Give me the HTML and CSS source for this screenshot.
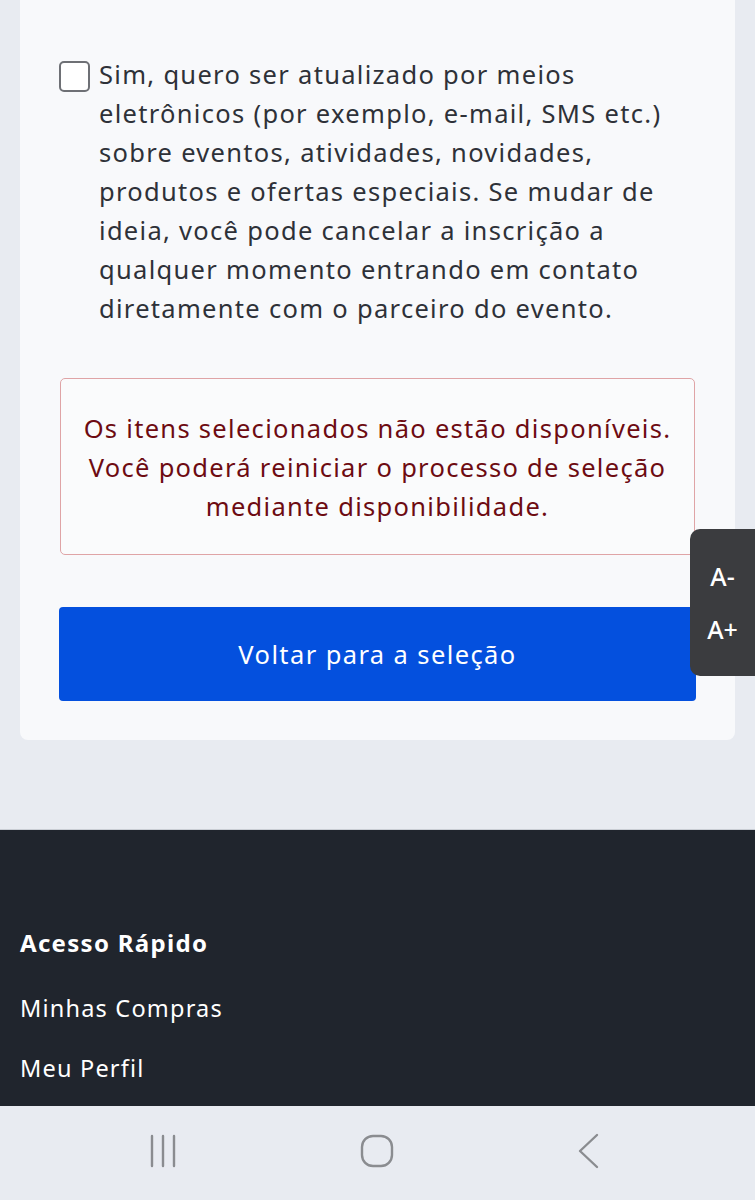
FILE: index.html
```html
<!DOCTYPE html>
<html lang="pt-BR">
<head>
<meta charset="utf-8">
<title>Seleção</title>
<link rel="stylesheet" href="styles.css">
</head>
<body>
<main class="page">
  <section class="card">
    <label class="consent">
      <span class="checkbox"></span>
      <span class="consent-text">Sim, quero ser atualizado por meios<br>eletrônicos (por exemplo, e-mail, SMS etc.)<br>sobre eventos, atividades, novidades,<br>produtos e ofertas especiais. Se mudar de<br>ideia, você pode cancelar a inscrição a<br>qualquer momento entrando em contato<br>diretamente com o parceiro do evento.</span>
    </label>
    <div class="alert">Os itens selecionados não estão disponíveis.<br>Você poderá reiniciar o processo de seleção<br>mediante disponibilidade.</div>
    <button class="primary-btn" type="button">Voltar para a seleção</button>
  </section>
</main>
<footer class="footer">
  <h2 class="footer-title">Acesso Rápido</h2>
  <a class="footer-link" href="#">Minhas Compras</a>
  <a class="footer-link" href="#">Meu Perfil</a>
</footer>
<nav class="sysnav">
  <svg class="nav-icon" width="30" height="34" viewBox="0 0 30 34"><g stroke="#8a8c90" stroke-width="2.4" stroke-linecap="round"><line x1="3" y1="2" x2="3" y2="32"/><line x1="14" y1="2" x2="14" y2="32"/><line x1="25" y1="2" x2="25" y2="32"/></g></svg>
  <svg class="nav-icon" width="34" height="34" viewBox="0 0 34 34"><rect x="2" y="2" width="30" height="30" rx="11" fill="none" stroke="#8a8c90" stroke-width="2.4"/></svg>
  <svg class="nav-icon" width="24" height="36" viewBox="0 0 24 36"><polyline points="21,2 4,18 21,34" fill="none" stroke="#8a8c90" stroke-width="2.4" stroke-linecap="round" stroke-linejoin="round"/></svg>
</nav>
<div class="font-tool">
  <span class="font-btn">A-</span>
  <span class="font-btn">A+</span>
</div>
</body>
</html>
```
FILE: styles.css
```css
* { box-sizing: border-box; }
html, body { margin: 0; padding: 0; }
body {
  background: #e8ebf1;
  font-family: "Noto Sans", "Open Sans", sans-serif;
  color: #2b2f36;
  width: 755px;
}
.page {
  padding: 0 20px 89px;
}
.card {
  background: #f8f9fb;
  border-radius: 0 0 8px 8px;
  padding: 55px 39px 39px 39px;
  display: flex;
  flex-direction: column;
}
.consent {
  display: flex;
  align-items: flex-start;
  gap: 9px;
}
.checkbox {
  flex: none;
  width: 31px;
  height: 31px;
  margin-top: 6px;
  border: 2px solid #6e7075;
  border-radius: 5px;
  background: #fff;
}
.consent-text {
  font-size: 25.5px;
  line-height: 39px;
  letter-spacing: 1.3px;
  white-space: nowrap;
  color: #2e3138;
}
.alert {
  margin: 50px 1px 0 1px;
  border: 1.5px solid #dfa4a6;
  border-radius: 5px;
  padding: 30px 10px 28px;
  text-align: center;
  font-size: 25.5px;
  line-height: 39px;
  letter-spacing: 1.3px;
  white-space: nowrap;
  color: #6d0b12;
  background: #fafbfc;
}
.primary-btn {
  margin-top: 52px;
  height: 94px;
  border: none;
  border-radius: 4px;
  background: #0450de;
  color: #fff;
  font-family: inherit;
  font-size: 25.5px;
  letter-spacing: 1.4px;
}
.footer {
  background: #20252d;
  border-top: 1px solid #c9cdd4;
  height: 277px;
  padding: 91px 20px 0;
  display: flex;
  flex-direction: column;
}
.footer-title {
  margin: 0;
  color: #fff;
  font-size: 24px;
  font-weight: 700;
  line-height: 44px;
  letter-spacing: 1.3px;
}
.footer-link {
  color: #fff;
  text-decoration: none;
  font-size: 23.5px;
  line-height: 44px;
  letter-spacing: 1.2px;
  margin-top: 21px;
}
.footer-link + .footer-link { margin-top: 16px; }
.sysnav {
  height: 95px;
  background: #e8ebf1;
  display: flex;
  align-items: center;
  padding-bottom: 6px;
}
.nav-icon:nth-child(1) { margin-left: 149px; }
.nav-icon:nth-child(2) { margin-left: 181px; }
.nav-icon:nth-child(3) { margin-left: 182px; }
.font-tool {
  position: absolute;
  left: 690px;
  top: 529px;
  width: 65px;
  height: 147px;
  background: #3b3c3f;
  border-radius: 10px 0 0 10px;
  display: flex;
  flex-direction: column;
  align-items: center;
  padding-top: 32px;
  gap: 23px;
}
.font-btn {
  color: #fff;
  font-size: 25px;
  line-height: 30px;
  font-weight: 500;
}
```
